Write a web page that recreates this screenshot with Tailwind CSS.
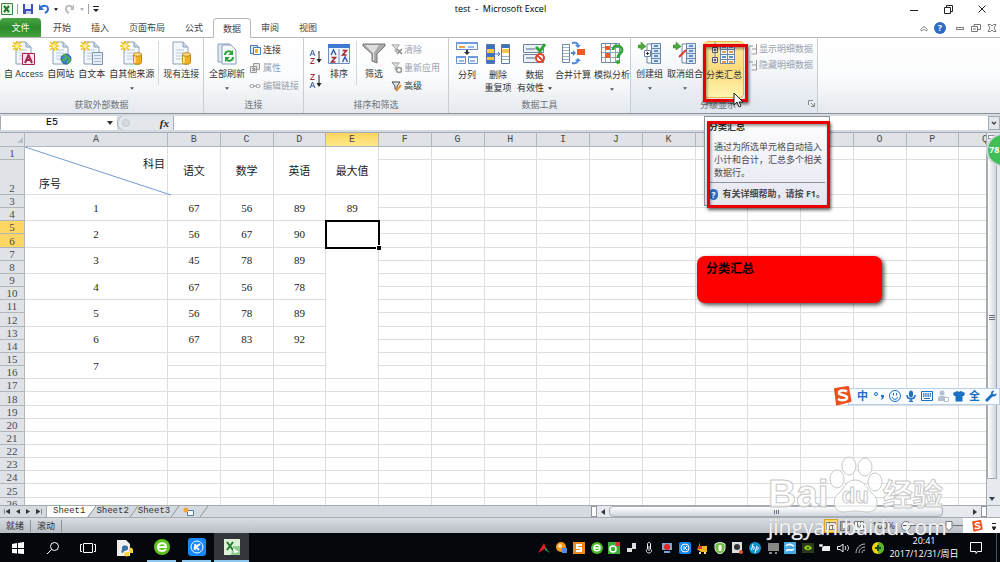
<!DOCTYPE html>
<html lang="zh-CN">
<head>
    <meta charset="UTF-8">
    <meta name="viewport" content="width=device-width, initial-scale=1.0">
    <title>test - Microsoft Excel</title>
    <script src="https://cdn.jsdelivr.net/npm/@tailwindcss/browser@4"></script>
</head>
<body class="relative flex h-screen flex-col overflow-hidden bg-white font-['Open_Sans','Noto_Sans_CJK_SC',sans-serif] text-[9px] leading-[12px] text-[#333]">

    <!-- Shared icon parts -->
    <svg class="hidden">
        <symbol id="doc" viewBox="0 0 24 24">
            <path d="M4 1h10l5 5v17H4z" fill="#f4f8fc" stroke="#8ba0b8" />
            <path d="M14 1v5h5" fill="#c9d9ea" stroke="#8ba0b8" />
            <path d="M7 9h8M7 12h8M7 15h6M7 18h6" stroke="#b9c9da" />
        </symbol>
        <symbol id="spark" viewBox="0 0 10 10">
            <path d="M5 0v10M0 5h10M1 1l8 8M9 1l-8 8" stroke="#f4c20d" stroke-width="1.5" />
            <circle cx="5" cy="5" r="2" fill="#fff3a0" />
        </symbol>
        <symbol id="cyl" viewBox="0 0 10 14">
            <path d="M.5 2.500v9c0 2.500 9 2.500 9 0v-9z" fill="#f2b01e" stroke="#b57a0c" />
            <path d="M2 4v8" stroke="#ffe59a" stroke-width="2" />
            <ellipse cx="5" cy="2.500" rx="4.500" ry="2" fill="#ffe08a" stroke="#b57a0c" />
        </symbol>
        <symbol id="down" viewBox="0 0 6 4"><path d="M0 0h6L3 4z" fill="currentColor" /></symbol>
        <symbol id="funnel" viewBox="0 0 12 12">
            <path d="M1 1h9L7 5v5L5 9V5z" fill="#ddd" stroke="#999" />
        </symbol>
        <symbol id="outline" viewBox="0 0 24 24">
            <path d="M9 3h5M9 3v19h5" stroke="#6d87a8" fill="none" />
            <path d="M13.500 2.500h9v20h-9z" fill="#dce8f6" stroke="#6d87a8" />
            <path d="M14 7.500h8M14 12.500h8M14 17.500h8" stroke="#6d87a8" />
            <path d="M16 5h4M16 10h4M16 15h4M16 20h4" stroke="#5b8fd0" stroke-width="2" />
            <path d="M0 4h3V1l5 4.500L3 9V7H0z" fill="#4cab39" stroke="#2c7a20" stroke-width=".5" />
        </symbol>
        <symbol id="sogou" viewBox="0 0 20 20">
            <path d="M3 3l13-2 2.500 14L5 18.500z" fill="#f0501e" stroke="#f0501e" stroke-width="2" stroke-linejoin="round" />
            <path d="M15 5.500c-3-2-8-1-8 1.500s8 1.500 8 4.500-6 3.500-9 1.500" fill="none" stroke="#fff" stroke-width="2.500" />
        </symbol>
    </svg>

    <!-- Title bar -->
    <header class="flex h-[18px] shrink-0 items-center">
        <div class="flex flex-1 items-center gap-1 pl-px">
            <svg class="size-3" viewBox="0 0 12 12"><path d="M.5.5h11v11H.5z" fill="#e8f3e4" stroke="#3b8a3e" /><path d="M3 3l5 6M8 3L3 9" stroke="#1f7a2e" stroke-width="2" /></svg>
            <span class="h-2.5 w-px bg-gray-400"></span>
            <button aria-label="保存"><svg class="size-3" viewBox="0 0 12 12"><path d="M1 1h10v10H1z" fill="#3f51b5" /><path d="M3 1h6v5H3z" fill="#eef" /><path d="M4 8h5v3H4z" fill="#c5cbe8" /></svg></button>
            <button aria-label="撤消" class="flex items-center gap-1"><svg class="size-3" viewBox="0 0 12 12"><path d="M2 5c3-3 8-3 8 1 0 2-1 3-3 4" fill="none" stroke="#2f6fd0" stroke-width="2" /><path d="M1 1v6h5z" fill="#2f6fd0" /></svg><svg class="h-[3px] w-1 text-black"><use href="#down" /></svg></button>
            <button aria-label="恢复" class="flex items-center gap-1 pl-0.5"><svg class="size-3" viewBox="0 0 12 12"><path d="M9 5c-3-3-7-3-7 1 0 2 1 3 3 4" fill="none" stroke="#bbb" stroke-width="2" /><path d="M10 1v6H6z" fill="#bbb" /></svg><svg class="h-[3px] w-1 text-gray-400"><use href="#down" /></svg></button>
            <span class="h-2.5 w-px bg-gray-400"></span>
            <button aria-label="自定义快速访问工具栏"><svg class="h-2 w-1.5" viewBox="0 0 6 8"><path d="M0 1.500h6" stroke="#222" /><path d="M0 4h6L3 7z" fill="#222" /></svg></button>
        </div>
        <h1 class="text-center text-black">test&nbsp; -&nbsp; Microsoft Excel</h1>
        <div class="flex flex-1 items-center justify-end gap-[22px]">
            <button aria-label="最小化"><svg class="size-3" viewBox="0 0 12 12"><path d="M2 7.500h8" stroke="#222" /></svg></button>
            <button aria-label="还原"><svg class="size-3" viewBox="0 0 12 12" fill="none" stroke="#222"><path d="M2.500 4.500h6v6h-6zM4.500 4V2.500h6v6H9" /></svg></button>
            <button aria-label="关闭" class="mr-3"><svg class="size-3" viewBox="0 0 12 12"><path d="M2.500 2.500l7 7M9.500 2.500l-7 7" stroke="#222" /></svg></button>
        </div>
    </header>

    <!-- Ribbon tabs -->
    <nav class="flex h-5 shrink-0 border-b border-[#b6babf] text-[#444]">
        <button class="w-[41px] rounded-t-sm bg-gradient-to-b from-[#4aa644] via-[#2c8a2c] to-[#43a23c] text-white">文件</button>
        <button class="ml-0.5 px-[10px]">开始</button>
        <button class="px-[10px]">插入</button>
        <button class="px-[10px]">页面布局</button>
        <button class="px-[10px]">公式</button>
        <button class="-mb-px rounded-t-sm border border-b-0 border-[#b6babf] bg-white px-[9px]">数据</button>
        <button class="px-[10px]">审阅</button>
        <button class="px-[10px]">视图</button>
        <div class="ml-auto flex items-center gap-1 pr-[2px]">
            <button aria-label="折叠功能区"><svg class="size-3" viewBox="0 0 12 12"><path d="M3 8.500c-1-2 1-2 3-4 2 2 4 2 3 4-1 1-2-1-3-1s-2 2-3 1z" fill="none" stroke="#777" /></svg></button>
            <button aria-label="帮助" class="size-3 rounded-full bg-[#2f6bc4] font-bold text-white">?</button>
            <button aria-label="最小化窗口" class="pl-1"><svg class="size-3" viewBox="0 0 12 12"><path d="M2.500 5.500h7v2h-7z" fill="none" stroke="#777" /></svg></button>
            <button aria-label="还原窗口"><svg class="size-3" viewBox="0 0 12 12" fill="none" stroke="#777"><path d="M1.500 4.500h6v5h-6zM4 4V2.500h6.500v5H8M3 7h3" /></svg></button>
            <button aria-label="关闭窗口"><svg class="size-3" viewBox="0 0 12 12"><path d="M2 2.500h2.500L6 4l1.500-1.500H10L8 6l2 3.500H7.500L6 8 4.500 9.500H2L4 6z" fill="none" stroke="#777" /></svg></button>
        </div>
    </nav>

    <!-- Ribbon -->
    <section class="flex h-[76px] shrink-0 border-b border-[#8e949b] bg-gradient-to-b from-white via-[#fbfcfd] to-[#e5e9ee]">
        <div class="flex w-[204px] flex-col border-r border-[#c9cdd3]">
            <div class="flex flex-1 items-start gap-1 pt-[3px] pl-1">
                <button class="flex flex-col items-center gap-[3px] whitespace-nowrap">
                    <svg class="size-6" viewBox="0 0 24 24"><use href="#doc" width="24" height="24" /><use href="#spark" width="10" height="10" /><path d="M10.500 12.500h12v11h-12z" fill="#fbe4ee" stroke="#a8234f" /><path d="M13 22l3.500-8 3.500 8M14.500 19h4" fill="none" stroke="#a8234f" stroke-width="2" /></svg>
                    <span>自 Access</span>
                </button>
                <button class="flex flex-col items-center gap-[3px] whitespace-nowrap">
                    <svg class="size-6" viewBox="0 0 24 24"><use href="#doc" width="24" height="24" /><use href="#spark" width="10" height="10" /><circle cx="17" cy="18" r="5" fill="#3d7fd0" stroke="#2a5ca0" /><path d="M14 15c2-2 4 0 3 2s-3 1-4 3M19 16l2 3-3 3" fill="none" stroke="#4db34a" stroke-width="2" /></svg>
                    <span>自网站</span>
                </button>
                <button class="flex flex-col items-center gap-[3px] whitespace-nowrap">
                    <svg class="size-6" viewBox="0 0 24 24"><use href="#doc" width="24" height="24" /><use href="#spark" width="10" height="10" /><path d="M12.500 11.500h10v12h-10z" fill="#e6edf5" stroke="#7d93ab" /><path d="M14 14.500h7M14 17.500h7M14 20.500h7" stroke="#a9bbce" /></svg>
                    <span>自文本</span>
                </button>
                <button class="flex flex-col items-center gap-[3px] whitespace-nowrap">
                    <svg class="size-6" viewBox="0 0 24 24"><use href="#doc" width="24" height="24" /><use href="#spark" width="10" height="10" /><use href="#cyl" x="13" y="11" width="9" height="13" /></svg>
                    <span>自其他来源</span>
                    <svg class="mt-1 h-[3px] w-1 text-gray-600"><use href="#down" /></svg>
                </button>
                <span class="h-11 w-px bg-[#d5d8dc]"></span>
                <button class="flex flex-col items-center gap-[3px] whitespace-nowrap">
                    <svg class="size-6" viewBox="0 0 24 24"><use href="#doc" width="24" height="24" /><use href="#cyl" x="13" y="11" width="9" height="13" /></svg>
                    <span>现有连接</span>
                </button>
            </div>
            <div class="h-[14px] text-center text-[#6b7077]">获取外部数据</div>
        </div>

        <div class="flex w-[100px] flex-col border-r border-[#c9cdd3]">
            <div class="flex flex-1 items-start gap-1 pt-[3px] pl-[5px]">
                <button class="flex flex-col items-center gap-[3px] whitespace-nowrap">
                    <svg class="size-6" viewBox="0 0 24 24"><path d="M3 3h12v18H3z" fill="#dfe9f4" stroke="#8ba0b8" /><path d="M7 4h9l5 5v14H7z" fill="#f6fafd" stroke="#8ba0b8" /><path d="M10 14c0-4 5-5 7-2M18 16c0 4-5 5-7 2" fill="none" stroke="#2fa43a" stroke-width="2" /><path d="M18 9v5h-5zM10 21v-5h5z" fill="#2fa43a" /></svg>
                    <span>全部刷新</span>
                    <svg class="mt-1 h-[3px] w-1 text-gray-600"><use href="#down" /></svg>
                </button>
                <div class="flex flex-col whitespace-nowrap">
                    <button class="flex h-[18px] items-center gap-0.5"><svg class="size-3" viewBox="0 0 12 12"><path d="M1.500 1.500h7v8h-7z" fill="#dce8f6" stroke="#4a78b5" /><path d="M4.500 3.500h7v7h-7z" fill="#fff" stroke="#4a78b5" /><path d="M6 5h3v4H6z" fill="#f2b01e" /></svg>连接</button>
                    <button class="flex h-[18px] items-center gap-0.5 text-gray-400" disabled><svg class="size-3" viewBox="0 0 12 12" fill="#e5e5e5" stroke="#999"><path d="M4.500 1.500h6v6h-6zM1.500 4.500h6v6h-6zM3 6.500h3M3 8.500h3" /></svg>属性</button>
                    <button class="flex h-[18px] items-center gap-0.5 text-gray-400" disabled><svg class="size-3" viewBox="0 0 12 12" fill="none" stroke="#999"><rect x="1" y="4.500" width="4" height="3" rx="1.500" /><rect x="7" y="4.500" width="4" height="3" rx="1.500" /><path d="M4 6h4" /></svg>编辑链接</button>
                </div>
            </div>
            <div class="h-[14px] text-center text-[#6b7077]">连接</div>
        </div>

        <div class="flex w-[145px] flex-col border-r border-[#c9cdd3]">
            <div class="flex flex-1 items-start gap-[5px] pt-[3px] pl-1">
                <div class="flex flex-col gap-2 pt-2">
                    <button aria-label="升序"><svg class="h-4 w-3.5" viewBox="0 0 14 16" fill="none"><path d="M2 7l2.500-6L7 7M3 5h3" stroke="#3c5fa8" /><path d="M2.500 9.500h4l-4 5h4" stroke="#a3282d" /><path d="M11 2v10" stroke="#222" /><path d="M8.500 10h5L11 14z" fill="#222" /></svg></button>
                    <button aria-label="降序"><svg class="h-4 w-3.5" viewBox="0 0 14 16" fill="none"><path d="M2.500 1.500h4l-4 5h4" stroke="#a3282d" /><path d="M2 15l2.500-6L7 15M3 13h3" stroke="#3c5fa8" /><path d="M11 2v10" stroke="#222" /><path d="M8.500 10h5L11 14z" fill="#222" /></svg></button>
                </div>
                <button class="flex flex-col items-center gap-[3px]">
                    <svg class="size-6" viewBox="0 0 24 24" fill="none"><path d="M1.500 3.500h21v19h-21z" fill="#f3f8fe" stroke="#6a8fc5" /><path d="M1 3h22v4H1z" fill="#3f78d0" /><path d="M12 8v14" stroke="#6a8fc5" /><path d="M4 14l2.500-5L9 14M15.500 21l2.500-5 2.500 5" stroke="#3c5fa8" stroke-width="1.500" /><path d="M15.500 9.500h4l-4 4.500h4M4.500 16.500h4l-4 4.500h4" stroke="#a3282d" stroke-width="1.500" /></svg>
                    <span>排序</span>
                </button>
                <span class="h-11 w-px bg-[#d5d8dc]"></span>
                <button class="flex flex-col items-center gap-[3px]">
                    <svg class="size-6" viewBox="0 0 24 24"><path d="M1 3h22v2l-8 8v9l-5-2v-7L1 5z" fill="#a9a9a9" stroke="#777" /><path d="M3 4h14l-5 8v8l-1-1v-7z" fill="#dedede" /></svg>
                    <span>筛选</span>
                </button>
                <div class="flex flex-col whitespace-nowrap">
                    <button class="flex h-[18px] items-center gap-px text-gray-400" disabled><svg class="size-3" viewBox="0 0 12 12"><use href="#funnel" width="10" height="10" /><path d="M6 5l5 5M11 5l-5 5" stroke="#888" stroke-width="1.500" /></svg>清除</button>
                    <button class="flex h-[18px] items-center gap-px text-gray-400" disabled><svg class="size-3" viewBox="0 0 12 12"><use href="#funnel" width="10" height="10" /><circle cx="8" cy="8" r="2.500" fill="none" stroke="#999" stroke-width="1.500" /></svg>重新应用</button>
                    <button class="flex h-[18px] items-center gap-px"><svg class="size-3" viewBox="0 0 12 12"><path d="M1 2h8L6 6v4L4 9V6z" fill="#eee" stroke="#444" /><path d="M5 11l5-6" stroke="#e0962a" stroke-width="2" /></svg>高级</button>
                </div>
            </div>
            <div class="h-[14px] text-center text-[#6b7077]">排序和筛选</div>
        </div>

        <div class="flex w-[182px] flex-col border-r border-[#c9cdd3]">
            <div class="flex flex-1 items-start gap-[3px] pt-[3px] pl-[6px] leading-[13px]">
                <button class="flex flex-col items-center gap-[3px]">
                    <svg class="size-6" viewBox="0 0 24 24"><path d="M1.500 1.500h21v7h-21zM1.500 15.500h9v7h-9zM13.500 15.500h9v7h-9z" fill="#f4f9ff" stroke="#6a8fc5" /><path d="M1 1h22v2H1zM1 15h10v2H1zM13 15h10v2H13z" fill="#6f9bdc" /><path d="M4 6h6" stroke="#eda046" stroke-width="2" /><path d="M13 6h6M4 20h5M15 20h5" stroke="#9cb8dd" stroke-width="2" /><path d="M12 9v3" stroke="#333" stroke-width="2" /><path d="M9 11h6l-3 3z" fill="#333" /></svg>
                    <span>分列</span>
                </button>
                <button class="flex w-8 flex-col items-center gap-[3px] whitespace-nowrap">
                    <svg class="size-6" viewBox="0 0 24 24"><path d="M.5 3.500h8v19h-8zM15.500 3.500h8v19h-8z" fill="#fff" stroke="#5579ab" /><path d="M1 4h7v4H1zM1 12h7v4H1zM16 4h7v3h-7z" fill="#3f6fc0" /><path d="M1 8h7v4H1zM1 16h7v3H1zM16 8h7v4h-7z" fill="#f5c648" /><path d="M1 19h7v3H1z" fill="#3f6fc0" /><path d="M16 15.500h7M16 18.500h7" stroke="#9ab" /><path d="M9 13h5M12 11l2 2-2 2" fill="none" stroke="#3f78d0" /></svg>
                    <span>删除<br>重复项</span>
                </button>
                <button class="flex flex-col items-center gap-[3px] whitespace-nowrap">
                    <svg class="size-6" viewBox="0 0 24 24" fill="none"><path d="M1.500 3.500h20v8h-20zM1.500 13.500h20v8h-20z" fill="#eaf0f8" stroke="#70839c" /><path d="M4 8h9M4 17h9" stroke="#9aabc2" stroke-width="2" /><path d="M14 6l4 4 5-7" stroke="#2ea62e" stroke-width="3" /><circle cx="18" cy="17" r="4" fill="#fff" stroke="#e0452c" stroke-width="2" /><path d="M15 14l6 6" stroke="#e0452c" stroke-width="2" /></svg>
                    <span>数据<br>有效性<svg class="ml-1 inline h-[3px] w-1"><use href="#down" /></svg></span>
                </button>
                <button class="flex flex-col items-center gap-[3px] whitespace-nowrap">
                    <svg class="size-6" viewBox="0 0 24 24"><path d="M1.500 3.500h7v18h-7z" fill="#fff" stroke="#6d87a8" /><path d="M2 6.500h6M2 9.500h6M2 12.500h6M2 15.500h6M2 18.500h6" stroke="#9db4cf" /><path d="M16 8h8v6h-8z" fill="#ee5a2c" /><path d="M11 2c4-1 6 0 6 3M11 22c4 1 6-1 6-3M10 12h4" fill="none" stroke="#4f86d8" stroke-width="2" /><path d="M14 4h6l-3 3zM14 20h6l-3-3zM12 9l3 3-3 3z" fill="#4f86d8" /></svg>
                    <span>合并计算</span>
                </button>
                <button class="flex flex-col items-center gap-[3px] whitespace-nowrap">
                    <svg class="size-6" viewBox="0 0 24 24" fill="none"><path d="M1.500 2.500h18v19h-18z" fill="#fff" stroke="#6d87a8" /><path d="M2 6.500h17M2 11.500h17M2 16.500h17M5.500 3v18M10.500 3v18M15.500 3v18" stroke="#8fa6c2" /><path d="M5 5h5v4H5zM5 12h5v5H5z" fill="#ee5a2c" /><path d="M13 9c0-6 9-5 9 0 0 4-4 3-4 8" stroke="#35a53d" stroke-width="3" /><circle cx="18" cy="21" r="2" fill="#35a53d" /></svg>
                    <span>模拟分析</span>
                    <svg class="mt-1 h-[3px] w-1 text-gray-600"><use href="#down" /></svg>
                </button>
            </div>
            <div class="h-[14px] text-center text-[#6b7077]">数据工具</div>
        </div>

        <div class="flex w-[187px] flex-col border-r border-[#c9cdd3] bg-gradient-to-b from-white/0 to-[#dde5ee]/60">
            <div class="flex flex-1 items-start pt-[3px] pl-[5px]">
                <button class="flex flex-col items-center gap-[3px] whitespace-nowrap">
                    <svg class="size-6" viewBox="0 0 24 24"><use href="#outline" width="24" height="24" /><path d="M6.500 9.500h6v6h-6z" fill="#fff" stroke="#6d87a8" /><path d="M8 12.500h3M9.500 11v3" stroke="#333" /></svg>
                    <span>创建组</span>
                    <svg class="mt-1 h-[3px] w-1 text-gray-600"><use href="#down" /></svg>
                </button>
                <button class="ml-1 flex flex-col items-center gap-[3px] whitespace-nowrap">
                    <svg class="size-6" viewBox="0 0 24 24"><use href="#outline" width="24" height="24" /><path d="M6 16l7-7" stroke="#e03a2c" stroke-width="2" /></svg>
                    <span>取消组合</span>
                    <svg class="mt-1 h-[3px] w-1 text-gray-600"><use href="#down" /></svg>
                </button>
                <button class="relative ml-px flex h-[57px] w-10 flex-col items-center gap-[3px] rounded-sm border border-[#e8b94a] bg-gradient-to-b from-[#fbe8a0] via-[#fbdc7c] to-[#fff3b0] whitespace-nowrap">
                    <svg class="size-6" viewBox="0 0 24 24"><path d="M3 0v22" stroke="#6d87a8" /><path d="M.5 5.500h5v5h-5zM.5 15.500h5v5h-5z" fill="#fff" stroke="#556" /><path d="M1.500 8h3M3 6.500v3M1.500 18h3M3 16.500v3" stroke="#333" /><path d="M8.500 2.500h14v19h-14z" fill="#f4f9ff" stroke="#6d87a8" /><path d="M9 7.500h13M9 12.500h13M9 17.500h13M15.500 3v18" stroke="#6d87a8" /><path d="M10 10h4M17 10h4M10 20h4M17 20h4" stroke="#eda046" stroke-width="2" /><path d="M10 5h4M17 5h4M10 15h4M17 15h4" stroke="#5b8fd0" stroke-width="2" /></svg>
                    <span>分类汇总</span>
                    <!-- Highlight frame -->
                    <span class="absolute -right-[5px] -bottom-[5px] -left-[2px] top-[2px] border-[3px] border-[#e60000] shadow-[1px_2px_3px_rgba(0,0,0,0.6),inset_1px_2px_3px_rgba(0,0,0,0.4)]"></span>
                    <svg class="absolute -right-px -bottom-[11px] h-4 w-3" viewBox="0 0 12 16"><path d="M2 1v12l3-3 2 5 2-1-2-4h4z" fill="#fff" stroke="#222" /></svg>
                </button>
                <div class="ml-[5px] flex flex-col whitespace-nowrap text-gray-400">
                    <button class="flex h-4 items-center gap-0.5" disabled><svg class="h-3 w-2" viewBox="0 0 8 12" fill="none" stroke="#999"><path d="M0 3h4M7.500 1v10h-5M3 6h4" /></svg>显示明细数据</button>
                    <button class="flex h-4 items-center gap-0.5" disabled><svg class="h-3 w-2" viewBox="0 0 8 12" fill="none" stroke="#999"><path d="M0 3h4M7.500 1v10h-5M3 6h4" /></svg>隐藏明细数据</button>
                </div>
            </div>
            <div class="flex h-[14px] items-start text-[#6b7077]">
                <span class="flex-1 text-center">分级显示</span>
                <button aria-label="分级显示设置" class="px-0.5"><svg class="size-2" viewBox="0 0 8 8" fill="none" stroke="#888"><path d="M1.500 6V1.500H6M4 4l3 3M7.500 4v3.500H4" /></svg></button>
            </div>
        </div>
    </section>

    <!-- Formula bar -->
    <div class="flex h-[19px] shrink-0 border-b border-[#a5abb3] bg-[#d5dae0] pt-[2px] pb-[2px]">
        <div class="flex w-[117px] items-center justify-between border-l border-[#a5abb3] bg-white pr-1">
            <input aria-label="名称框" value="E5" class="w-[102px] text-center font-['Liberation_Mono',monospace] text-[10px] text-black">
            <button aria-label="名称框列表"><svg class="h-1 w-1.5"><use href="#down" /></svg></button>
        </div>
        <div class="flex w-14 items-center justify-between rounded-l-full border-l border-[#a5abb3] bg-[#e3e7ec] pr-1 pl-1">
            <span class="size-2 rounded-full border border-[#c5cad0] bg-[#d5dae0]"></span>
            <button class="font-['Liberation_Serif',serif] text-[11px] font-bold text-[#222] italic">fx</button>
        </div>
        <input aria-label="编辑栏" class="min-w-0 flex-1 border-l border-[#a5abb3] bg-white">
        <button aria-label="展开编辑栏" class="flex w-3 items-center justify-center border border-[#a5abb3] bg-[#e3e7ec]"><svg class="size-2" viewBox="0 0 8 8"><path d="M2 3l2 2 2-2" fill="none" stroke="#444" stroke-width="1.500" /></svg></button>
    </div>

    <!-- Worksheet -->
    <main class="flex min-h-0 flex-1 bg-[#d5dae0]">
        <div class="relative min-w-0 flex-1 overflow-hidden bg-white">
            <table class="h-[378px] w-[1012px] table-fixed border-separate border-spacing-0 font-['Liberation_Serif','Noto_Sans_CJK_SC',serif] text-[11px] leading-[12px] text-[#222]">
                <colgroup>
                    <col class="w-[25px]">
                    <col class="w-[143px]">
                    <col span="16">
                </colgroup>
                <thead><tr id="column-heads" class="h-[14px]"></tr></thead>
                <tbody id="sheet-rows"></tbody>
            </table>
            <!-- Diagonal of the header cell -->
            <svg class="absolute top-[14px] left-[25px] h-[50px] w-[147px]" viewBox="0 0 147 50"><path d="M0 0L146 48" stroke="#6f9bd1" /></svg>
        </div>
        <!-- Vertical scrollbar -->
        <div class="flex w-[14px] flex-col items-center border-l border-[#a5abb3] bg-[#e6eaef] pr-[3px]">
            <span class="mt-0.5 h-1 w-2 border border-[#8e949b] bg-white"></span>
            <span class="mt-4 flex w-[10px] flex-1 flex-col items-center justify-center gap-px border border-[#a5abb3] bg-gradient-to-r from-white to-[#d0d6de]">
                <i class="h-px w-1.5 bg-gray-500"></i><i class="h-px w-1.5 bg-gray-500"></i><i class="h-px w-1.5 bg-gray-500"></i>
            </span>
            <button aria-label="向下滚动" class="flex h-[26px] items-end pb-0.5 text-gray-700"><svg class="mb-0.5 h-1 w-1.5"><use href="#down" /></svg></button>
        </div>
    </main>

    <!-- Sheet tabs and horizontal scrollbar -->
    <div class="flex h-[12px] shrink-0 items-stretch border-t border-[#a5abb3] bg-[#d5dae0] font-['Liberation_Mono',monospace] leading-[11px] text-[#333]">
        <div class="flex w-[46px] items-center justify-between px-1">
            <button aria-label="第一张"><svg class="block h-[5px] w-[6px]" viewBox="0 0 6 5"><path d="M.5 0v5M6 0v5L2 2.500z" stroke="#333" fill="#333" stroke-width=".5" /></svg></button>
            <button aria-label="上一张"><svg class="block h-[5px] w-[4px]" viewBox="0 0 4 5"><path d="M4 0v5L0 2.500z" fill="#333" /></svg></button>
            <button aria-label="下一张"><svg class="block h-[5px] w-[4px]" viewBox="0 0 4 5"><path d="M0 0v5l4-2.500z" fill="#333" /></svg></button>
            <button aria-label="最后一张"><svg class="block h-[5px] w-[6px]" viewBox="0 0 6 5"><path d="M5.500 0v5M0 0v5l4-2.500z" stroke="#333" fill="#333" stroke-width=".5" /></svg></button>
        </div>
        <button class="border-l border-[#a5abb3] bg-white pr-0.5 pl-1.5">Sheet1</button>
        <svg class="h-full w-[9px]" viewBox="0 0 9 11"><path d="M0 0h9L0 11z" fill="#fff" /><path d="M9 0L1 11" stroke="#8e949b" /></svg>
        <button>Sheet2</button>
        <svg class="h-full w-[9px]" viewBox="0 0 9 11"><path d="M9 0L1 11" stroke="#8e949b" /></svg>
        <button>Sheet3</button>
        <svg class="h-full w-[9px]" viewBox="0 0 9 11"><path d="M9 0L1 11" stroke="#8e949b" /></svg>
        <button aria-label="插入工作表" class="px-1"><svg class="block h-[10px] w-3" viewBox="0 0 12 10"><path d="M4.500 3.500h6v5h-6z" fill="#fff" stroke="#5579ab" /><circle cx="3" cy="3" r="2.500" fill="#f0a63c" /></svg></button>
        <svg class="h-full w-[9px]" viewBox="0 0 9 11"><path d="M9 0L1 11" stroke="#8e949b" /></svg>
        <div class="ml-auto flex w-[409px] items-center bg-[#e6eaef] pr-[13px]">
            <span class="h-full w-[6px] border border-[#8e949b] bg-white"></span>
            <button aria-label="向左滚动" class="px-1"><svg class="block h-[6px] w-[4px]" viewBox="0 0 4 6"><path d="M4 0v6L0 3z" fill="#333" /></svg></button>
            <span class="flex h-full w-[334px] items-center justify-center gap-px rounded-sm border border-[#a5abb3] bg-gradient-to-b from-white to-[#d0d6de]">
                <i class="h-1 w-px bg-gray-500"></i><i class="h-1 w-px bg-gray-500"></i><i class="h-1 w-px bg-gray-500"></i>
            </span>
            <button aria-label="向右滚动" class="ml-auto px-1"><svg class="block h-[6px] w-[4px]" viewBox="0 0 4 6"><path d="M0 0v6l4-3z" fill="#333" /></svg></button>
            <span class="h-full w-[6px] border border-[#8e949b] bg-white"></span>
        </div>
    </div>

    <!-- Status bar -->
    <footer class="flex h-4 shrink-0 items-center border-t border-[#a5abb3] bg-gradient-to-b from-[#d9dde2] to-[#b9bec6]">
        <span class="border-r border-[#8e949b] px-1.5">就绪</span>
        <span class="border-r border-[#8e949b] px-1.5">滚动</span>
        <div class="ml-auto flex items-center">
            <button aria-label="普通" class="flex size-3.5 items-center justify-center border border-[#d9a520] bg-[#fbd968]"><svg class="size-2.5" viewBox="0 0 10 10" fill="#fff" stroke="#777"><path d="M.5 1.500h9v7h-9zM0 4.500h10M3.500 2v6M6.500 2v6" /></svg></button>
            <button aria-label="页面布局" class="flex size-3.5 items-center justify-center"><svg class="size-2.5" viewBox="0 0 10 10"><path d="M.5.5h9v9h-9z" fill="#aaa" stroke="#777" /><path d="M3 2h4v5H3z" fill="#fff" /></svg></button>
            <button aria-label="分页预览" class="flex size-3.5 items-center justify-center"><svg class="size-2.5" viewBox="0 0 10 10" fill="#fff" stroke="#777"><path d="M.5.5h9v9h-9zM3.500 1v5H6M6.500 1v5" /></svg></button>
            <span class="px-1.5">100%</span>
            <button aria-label="缩小" class="flex size-2.5 items-center justify-center rounded-full border border-gray-500 bg-white"><i class="h-px w-1.5 bg-gray-700"></i></button>
            <span class="h-px w-[34px] bg-gray-500"></span>
            <svg class="h-[10px] w-[8px]" viewBox="0 0 8 10"><path d="M1 .5h6v6L4 9.500l-3-3z" fill="#fff" stroke="#777" /></svg>
            <span class="h-px w-[10px] bg-gray-500"></span>
            <div class="flex h-[15px] w-[37px] items-center justify-between bg-white pr-1 pl-2">
                <svg class="size-3"><use href="#sogou" /></svg>
                <svg class="h-2 w-1" viewBox="0 0 4 8"><path d="M0 1.500h4M0 5h4L2 8z" stroke="#222" fill="#222" /></svg>
            </div>
        </div>
    </footer>

    <!-- Taskbar -->
    <div class="flex h-[29px] shrink-0 items-stretch bg-[#04070c] text-white">
        <button aria-label="开始" class="flex w-[35px] items-center justify-center"><svg class="size-3" viewBox="0 0 12 12"><path d="M0 2l5-1v5H0zM6 1l6-1v6H6zM0 7h5v4.500L0 11zM6 7h6v5l-6-.5z" fill="#fff" /></svg></button>
        <button aria-label="搜索" class="flex w-[35px] items-center justify-center"><svg class="size-3" viewBox="0 0 12 12" fill="none" stroke="#fff"><circle cx="7.500" cy="4.500" r="4" /><path d="M4.500 7.500L0 12" /></svg></button>
        <button aria-label="任务视图" class="flex w-[35px] items-center justify-center"><svg class="h-3 w-4" viewBox="0 0 16 12" fill="none" stroke="#fff"><path d="M3.500 1.500h9v9h-9zM2 2.500H.5v7H2M14 2.500h1.500v7H14" /></svg></button>
        <button aria-label="Python" class="flex w-[39px] items-center justify-center"><svg class="size-[18px]" viewBox="0 0 18 18"><path d="M1 1h9l4 4v12H1z" fill="#eee" /><path d="M6 11V8c0-2 6-2 6 0v2c0 2-5 1-5 4-2 0-2-2-1-3z" fill="#3873a8" /><path d="M17 11v3h-4v3c-3 1-5 0-5-2s4-2 5-2V9c3-1 4 1 4 2z" fill="#ffd43b" /></svg></button>
        <button aria-label="浏览器" class="mx-[3px] flex w-[29px] items-center justify-center border-b-2 border-[#8ec6f0]"><svg class="size-4" viewBox="0 0 16 16" fill="none"><circle cx="8" cy="8" r="8" fill="#5cc41c" /><path d="M4 8h8c0-5-8-5-8 0s6 5 8 2" stroke="#fff" stroke-width="2" /></svg></button>
        <button aria-label="酷狗" class="mx-[3px] flex w-[29px] items-center justify-center border-b-2 border-[#8ec6f0]"><svg class="size-[18px]" viewBox="0 0 18 18" fill="none" stroke="#fff"><rect width="18" height="18" rx="3" fill="#1587ff" stroke="none" /><circle cx="9" cy="9" r="6" /><path d="M7.500 6l-1 6M12 6l-4 3 3 3" stroke-width="2" /></svg></button>
        <button aria-label="Excel" class="flex w-[35px] items-center justify-center border-b-2 border-[#8ec6f0] bg-[#33373c]"><svg class="size-4" viewBox="0 0 16 16"><path d="M0 0h16v16H0z" fill="#dff0d8" /><path d="M9 7h7v9H7z" fill="#8fce8a" /><path d="M3 3l6 8M9 3l-6 8" stroke="#1f7a2e" stroke-width="2" /><path d="M9 9l6 4-5 1z" fill="#fff" /></svg></button>
        <div class="ml-auto flex w-[346px] items-center justify-between">
            <svg class="size-3" viewBox="0 0 12 12"><path d="M0 11L6 1l2 5-3 2z" fill="#e31b23" /><path d="M7 5l5 6-5-3z" fill="#1aa64b" /></svg>
            <svg class="size-3" viewBox="0 0 12 12"><circle cx="5" cy="5" r="5" fill="#f39a1e" /><circle cx="4" cy="4" r="2" fill="#ffe3a6" /><path d="M6 6h5v5H6z" fill="#4f8fd6" /></svg>
            <svg class="size-3" viewBox="0 0 12 12"><path d="M0 0h12v12H0z" fill="#f08a1c" /><path d="M9 3H4v3h4v3H3" fill="none" stroke="#fff" stroke-width="2" /></svg>
            <svg class="size-3" viewBox="0 0 12 12"><circle cx="6" cy="6" r="6" fill="#4fb82a" /><path d="M3 6h6c0-4-6-4-6 0s5 3 6 1" fill="none" stroke="#fff" stroke-width="1.500" /></svg>
            <svg class="size-3" viewBox="0 0 12 12"><path d="M0 0h12v12H0z" fill="#3fae3a" /><circle cx="5" cy="7" r="3" fill="none" stroke="#fff" stroke-width="1.500" /><path d="M8 0h4v4H8z" fill="#d33" /></svg>
            <svg class="size-3" viewBox="0 0 12 12"><path d="M1 6h5v4H1zM6 1h4v6H6z" fill="#ddd" /></svg>
            <svg class="size-3" viewBox="0 0 12 12" fill="none" stroke="#eee"><path d="M4.500 7V2c0-2 3-2 3 0v5c2 1 1 4-1.500 4S2.500 8 4.500 7zM6 4v5" /></svg>
            <svg class="size-3" viewBox="0 0 12 12"><path d="M1 1h10v7H1zM3 9h6v2H3z" fill="#7fa3d8" /><circle cx="6" cy="5" r="3" fill="#e3261e" /></svg>
            <svg class="size-3" viewBox="0 0 12 12" fill="none" stroke="#fff"><rect width="12" height="12" rx="2" fill="#1587ff" stroke="none" /><circle cx="6" cy="6" r="4" /><path d="M5 4v4M8 4L6 6l2 2" /></svg>
            <svg class="size-3" viewBox="0 0 12 12"><path d="M3 0l1 4h7v6H5L1 7l2-2z" fill="#f0b429" /><path d="M2 4h4v3H2z" fill="#d83a2b" /><path d="M3 10h2v2H3zM8 10h2v2H8z" fill="#f6dc9a" /></svg>
            <svg class="size-3" viewBox="0 0 12 12"><path d="M6 0l5 2v4c0 3-2 5-5 6-3-1-5-3-5-6V2z" fill="#6cbf3c" stroke="#eee" /><path d="M6 3v6" stroke="#fff" stroke-width="3" /></svg>
            <svg class="size-3" viewBox="0 0 12 12"><path d="M1 0h10v11H1z" fill="#ddd" /><circle cx="6" cy="5" r="3" fill="#333" /><circle cx="10" cy="10" r="2" fill="#e5533d" /></svg>
            <svg class="size-3" viewBox="0 0 12 12" fill="none" stroke="#fff"><circle cx="6" cy="6" r="6" fill="#1193d4" stroke="none" /><path d="M4 2L2.500 8M3.500 5c2-1 2 0 1 3M7.500 5L6 11M7 5c4-1 2 4 0 3" /></svg>
            <svg class="size-3" viewBox="0 0 12 12"><path d="M1 1h11v8H1zM2 10h3v2H2zM8 10h2v2H8z" fill="#888" /></svg>
            <svg class="size-3" viewBox="0 0 12 12"><path d="M0 0h12v12H0z" fill="#4aa8e0" /><path d="M2 4c4-4 6 0 8 0M2 9c3-3 5 1 8-2" fill="none" stroke="#fff" stroke-width="1.500" /></svg>
            <svg class="size-3" viewBox="0 0 12 12"><path d="M0 1h12v10H0z" fill="#2b3a1a" /><path d="M2 6c2-4 6-3 8 0-2 3-6 3-8 0z" fill="#8fc31f" /><circle cx="6" cy="6" r="1" fill="#2b3a1a" /></svg>
            <svg class="size-3" viewBox="0 0 12 12"><path d="M3 4h8v5H3z" fill="#eee" /><path d="M0 2h4v3H0z" fill="#eee" stroke="#04070c" stroke-width=".5" /></svg>
            <svg class="size-3" viewBox="0 0 12 12" fill="none" stroke="#eee"><path d="M.5 4.500H3L6 2v8L3 7.500H.5zM8 4c1 1 1 3 0 4M10 3c2 2 2 4 0 6" /></svg>
            <svg class="size-3" viewBox="0 0 12 12" fill="none" stroke="#bbb"><path d="M2 11c0-5 4-9 9-9M5 11c0-4 3-6 6-6M8 11c0-2 1-3 3-3" /></svg>
            <svg class="size-3" viewBox="0 0 12 12"><circle cx="6" cy="6" r="6" fill="#f4d20c" /><path d="M6 0a6 6 0 010 12z" fill="#57b72c" /><path d="M6 3v6M3 6h6" stroke="#174d0c" stroke-width="2" /></svg>
        </div>
        <div class="ml-1 flex w-[72px] flex-col items-center justify-end gap-px whitespace-nowrap pb-0.5"><time>20:41</time><span>2017/12/31/周日</span></div>
        <button aria-label="通知" class="ml-2.5 w-3"><svg class="size-3" viewBox="0 0 12 12" fill="none" stroke="#fff"><path d="M.5.5h11v9h-4L6 11.500V9.500H.5z" /></svg></button>
        <span class="ml-[14px] w-1 border-l border-gray-600"></span>
    </div>

    <!-- Tooltip of the subtotal button -->
    <aside class="absolute top-[116px] left-[704px] w-[126px] border border-[#8e949b] bg-gradient-to-b from-white to-[#e4e5f0] text-[#4a4a4a] shadow-md">
        <h2 class="px-1 pt-1 font-bold text-[#333]">分类汇总</h2>
        <p class="pt-[7px] pb-[3px] pl-[9px] leading-[13px] whitespace-nowrap">通过为所选单元格自动插入<br>小计和合计，汇总多个相关<br>数据行。</p>
        <div class="mx-1 flex items-center gap-[5px] border-t border-[#8e949b] py-[5px] font-bold whitespace-nowrap">
            <span class="size-[11px] rounded-full bg-[#2f6bc4] text-center leading-[11px] text-white">?</span>有关详细帮助，请按 F1。
        </div>
        <span class="absolute top-1 -right-px -bottom-[3px] left-[2px] border-[3px] border-[#e60000] shadow-[1px_2px_3px_rgba(0,0,0,0.6),inset_1px_2px_3px_rgba(0,0,0,0.4)]"></span>
    </aside>

    <!-- Red label -->
    <div class="absolute top-[256px] left-[697px] h-[47px] w-[185px] rounded-lg bg-[#fe0000] px-[9px] py-[7px] text-[12px] font-bold text-black shadow-[2px_2px_4px_rgba(0,0,0,0.7)]">分类汇总</div>

    <!-- Floating speed ball -->
    <div class="absolute top-[133px] -right-5 size-[34px] rounded-full border-2 border-gray-300 bg-[#3fbf55] pl-px leading-[30px] font-bold text-white">78</div>

    <!-- Input method bar -->
    <div class="absolute top-[386px] right-0 flex items-center">
        <svg class="z-10 size-5"><use href="#sogou" /></svg>
        <div class="-ml-1 flex h-[17px] items-center gap-1 border border-[#b8d0e8] bg-[#f8fbff] pr-[2px] pl-2 text-[11px] font-bold text-[#1b6fc4]">
            <span class="w-3">中</span>
            <svg class="size-3" viewBox="0 0 12 12"><circle cx="3" cy="4" r="1.500" fill="none" stroke="#1b6fc4" /><path d="M8 5h3c0 3-1 4-3 5l1-3H8z" fill="#1b6fc4" /></svg>
            <svg class="size-3" viewBox="0 0 12 12" fill="none" stroke="#1b6fc4"><circle cx="6" cy="6" r="5.500" /><path d="M4.500 3v2.500M7.500 3v2.500M3 7c1 3 5 3 6 0" /></svg>
            <svg class="size-3" viewBox="0 0 12 12" fill="none" stroke="#1b6fc4"><rect x="4.500" y="1" width="3" height="6" rx="1.500" fill="#1b6fc4" /><path d="M2 5c0 5 8 5 8 0M6 9v2.500M4 11.500h4" stroke-width="1.500" /></svg>
            <svg class="size-3" viewBox="0 0 12 12" fill="none" stroke="#1b6fc4"><path d="M2 4h8M2 6h8" stroke-width="1.500" stroke-dasharray="1.500 .7" /><path d="M.5 1.500h11v9H.5zM3 8.500h6" /></svg>
            <svg class="size-3" viewBox="0 0 12 12"><circle cx="5" cy="3" r="2.500" fill="#b4bfd0" /><path d="M1 11V8c0-3 8-3 8 0v3z" fill="#b4bfd0" /><path d="M7.500 7.500h4v4h-4z" fill="#fff" stroke="#b4bfd0" /></svg>
            <svg class="size-3" viewBox="0 0 12 12"><path d="M0 3l4-2c1 1 3 1 4 0l4 2-1 3H9.500v5.500h-7V6H1z" fill="#1b6fc4" /></svg>
            <span class="w-3">全</span>
            <svg class="size-3" viewBox="0 0 12 12"><path d="M1 11l6-6" stroke="#1b6fc4" stroke-width="3" /><path d="M7 1C5 3 6 6 8 6.500s4-1 3.500-3.500L9.500 4.500l-2-1L9.500.5z" fill="#1b6fc4" /></svg>
        </div>
    </div>

    <!-- Watermark -->
    <div class="pointer-events-none absolute top-[454px] left-[768px] w-[180px] font-['Liberation_Sans','Noto_Sans_CJK_SC',sans-serif] text-white/80">
        <div class="flex h-[62px] items-end font-bold whitespace-nowrap [-webkit-text-stroke:1px_#c8c8c8]">
            <span class="text-[39px] leading-[45px]">Bai</span>
            <span class="relative w-[54px]">
                <svg class="h-[60px] w-[54px]" viewBox="0 0 54 60" fill="#fff" fill-opacity=".8" stroke="#c8c8c8"><ellipse cx="8" cy="23" rx="7" ry="9" /><ellipse cx="20" cy="10" rx="7" ry="9" /><ellipse cx="36" cy="11" rx="7" ry="9" /><ellipse cx="46" cy="26" rx="7" ry="9" /><path d="M26 24c-10 0-11 10-17 14-6 5-5 18 5 18 5 0 8-1 12-1s8 1 13 1c10 0 12-12 5-18-6-4-8-14-18-14z" /></svg>
                <span class="absolute bottom-2 left-[13px] text-[22px] leading-6">du</span>
            </span>
            <span class="text-[30px] leading-[42px]">经验</span>
        </div>
        <div class="font-['Open_Sans',sans-serif] text-[21px] leading-[22px] text-white/90 [text-shadow:0_0_1px_#999]">jingyan.baidu.com</div>
    </div>

    <script>
        // Cells that hold text or are merged: address -> { text, span }
        const cells = {
            B1: { text: '语文', span: 2 }, C1: { text: '数学', span: 2 }, D1: { text: '英语', span: 2 }, E1: { text: '最大值', span: 2 },
            A1: { html: '<div class="flex h-[47px] flex-col justify-between pt-[11px] pb-[4px]"><span class="pr-0.5 text-right">科目</span><span class="pl-3.5 text-left">序号</span></div>', span: 2 },
            E3: { text: '89', span: 2 }, E5: { text: '', span: 2, selected: true }, E7: { text: '', span: 10 },
            A15: { text: '7', span: 2 }
        };
        const scores = [[67, 56, 89], [56, 67, 90], [45, 78, 89], [67, 56, 78], [56, 78, 89], [67, 83, 92]];
        scores.forEach((row, i) => {
            const r = 3 + i * 2;
            cells['A' + r] = { text: i + 1, span: 2 };
            row.forEach((value, c) => { cells['BCD'[c] + r] = { text: value, span: 2 }; });
        });

        const letters = 'ABCDEFGHIJKLMNOPQ'.split('');
        const headClass = 'border-r border-b border-[#b1b6bd] p-0 text-center font-normal text-[#4a4a4a] ';

        let heads = `<th class="${headClass} bg-[#dfe3e8]"><svg class="ml-auto size-2" viewBox="0 0 8 8"><path d="M7 1v6H1z" fill="#b8bec6" /></svg></th>`;
        letters.forEach(letter => {
            const fill = letter === 'E' ? 'bg-gradient-to-b from-[#fbd45e] to-[#fde98a]' : 'bg-[#dfe3e8]';
            heads += `<th scope="col" class="${headClass} ${fill} font-['Liberation_Mono',monospace] text-[10px]">${letter}</th>`;
        });
        document.getElementById('column-heads').innerHTML = heads;

        const covered = {};
        let rows = '';
        for (let r = 1; r <= 26; r++) {
            const height = r === 1 ? 'h-[13px]' : r === 2 ? 'h-[34px]' : '';
            const fill = r === 5 || r === 6 ? 'bg-[#fdd663]' : 'bg-[#dfe3e8]';
            rows += `<tr class="${height}"><th scope="row" class="${headClass} ${fill} align-bottom">${r}</th>`;
            letters.forEach(letter => {
                if (covered[letter + r]) return;
                const cell = cells[letter + r] || { text: '', span: 1 };
                for (let k = 1; k < cell.span; k++) covered[letter + (r + k)] = true;
                const frame = cell.selected ? 'relative outline-2 -outline-offset-1 outline-black' : '';
                const handle = cell.selected ? '<i class="absolute -right-[3px] -bottom-[3px] size-[5px] border-t border-l border-white bg-black"></i>' : '';
                rows += `<td rowspan="${cell.span}" class="border-r border-b border-[#dcdedf] p-0 text-center align-middle ${frame}">${cell.html || cell.text}${handle}</td>`;
            });
            rows += '</tr>';
        }
        document.getElementById('sheet-rows').innerHTML = rows;
    </script>
</body>
</html>
